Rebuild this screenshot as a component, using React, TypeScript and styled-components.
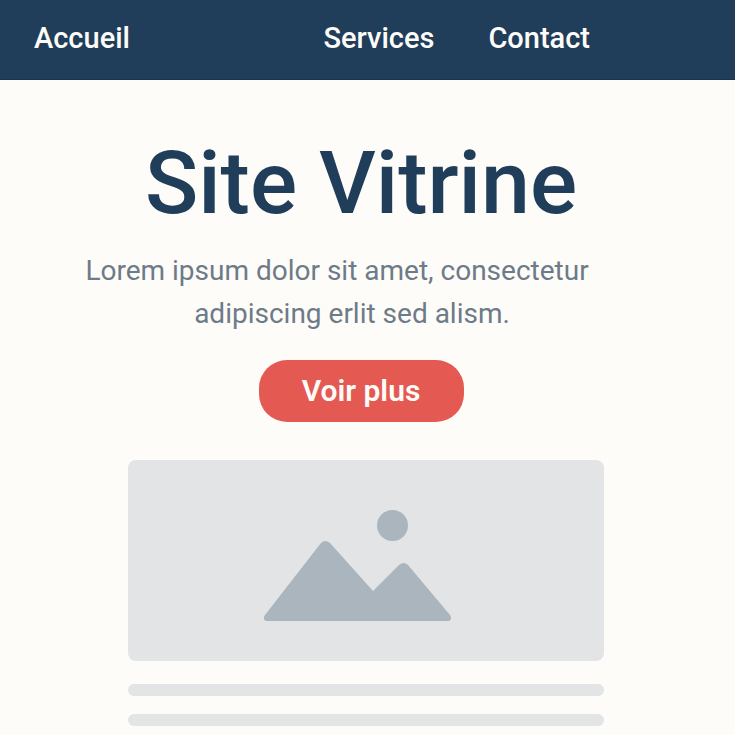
import React from "react";
import styled, { createGlobalStyle } from "styled-components";

const GlobalStyle = createGlobalStyle`
  * { box-sizing: border-box; }
  body {
    margin: 0;
    background: #fefcf8;
    font-family: Roboto, "Liberation Sans", sans-serif;
    overflow-x: hidden;
  }
`;

const Header = styled.header`
  background: #203e5a;
  height: 80px;
  padding: 0 145px 4px 34px;
  border-bottom: 1px solid #1a3350;
`;

const Nav = styled.nav`
  height: 100%;
  display: flex;
  align-items: center;
  gap: 54px;
`;

const NavLink = styled.a<{ $lead?: boolean }>`
  color: #fefcf8;
  font-size: 29px;
  line-height: 36px;
  font-weight: 500;
  text-decoration: none;
  margin-right: ${({ $lead }) => ($lead ? "auto" : "0")};
`;

const Hero = styled.main`
  padding: 57px 131px 0 128px;
  display: flex;
  flex-direction: column;
  align-items: center;
`;

const Intro = styled.section`
  display: flex;
  flex-direction: column;
  align-items: center;
  padding-right: 10px;
`;

const Title = styled.h1`
  margin: 0;
  color: #203e5a;
  font-size: 88px;
  line-height: 92px;
  font-weight: 500;
  white-space: nowrap;
`;

const Lead = styled.p`
  margin: 20px 0 0;
  padding-right: 48px;
  color: #6d7b89;
  font-size: 28px;
  line-height: 43px;
  text-align: center;
  white-space: nowrap;
`;

const LeadEnd = styled.span`
  display: block;
  padding-left: 30px;
`;

const Button = styled.button`
  margin-top: 25px;
  width: 205px;
  height: 62px;
  border: 0;
  border-radius: 28px;
  background: #e45952;
  color: #fefcf8;
  font: 600 30px/36px Roboto, sans-serif;
  cursor: pointer;
`;

const Picture = styled.figure`
  margin: 38px 0 12px;
  width: 100%;
  height: 201px;
  border-radius: 8px;
  background: #e2e4e5;
  display: flex;
  justify-content: center;
  padding: 48px 16px 0 0;
`;

const TextBar = styled.div`
  width: 100%;
  height: 12px;
  margin-top: 11px;
  border-radius: 6px;
  background: #e2e4e5;
  & + & { margin-top: 18px; }
`;

export default function App() {
  return (
    <>
      <GlobalStyle />
      <Header>
        <Nav>
          <NavLink href="#accueil" $lead>Accueil</NavLink>
          <NavLink href="#services">Services</NavLink>
          <NavLink href="#contact">Contact</NavLink>
        </Nav>
      </Header>
      <Hero>
        <Intro>
          <Title>Site Vitrine</Title>
          <Lead>
            Lorem ipsum dolor sit amet, consectetur{" "}
            <LeadEnd>adipiscing erlit sed alism.</LeadEnd>
          </Lead>
          <Button type="button">Voir plus</Button>
        </Intro>
        <Picture>
          <svg width="192" height="116" viewBox="262 508 192 116" fill="#abb5be" aria-hidden="true">
            <circle cx="392.5" cy="525.5" r="15.5" />
            <path d="M267 621C264 621 263 618 265 615L321 543Q325 539 330 543L373 591L399 565Q404 561 408 565L450 615C452 618 451 621 448 621Z" />
          </svg>
        </Picture>
        <TextBar />
        <TextBar />
      </Hero>
    </>
  );
}
